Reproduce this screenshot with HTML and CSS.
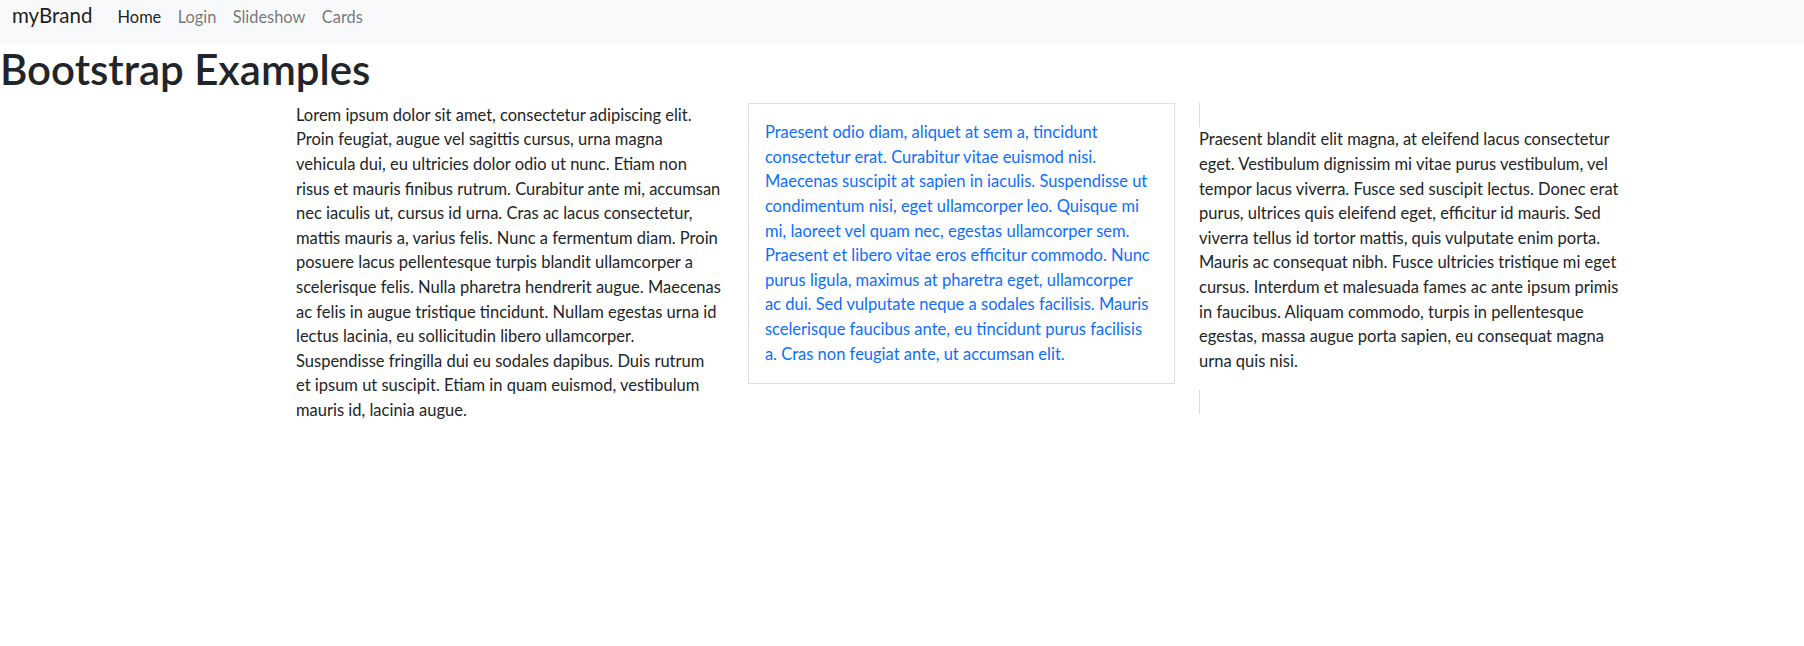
FILE: index.html
```html
<!DOCTYPE html>
<html lang="en">
<head>
<meta charset="utf-8">
<title>Bootstrap Examples</title>
<link rel="stylesheet" href="styles.css">
</head>
<body>
<nav class="navbar">
  <a class="navbar-brand" href="#">myBrand</a>
  <ul class="navbar-nav">
    <li><a class="nav-link active" href="#">Home</a></li>
    <li><a class="nav-link" href="#">Login</a></li>
    <li><a class="nav-link" href="#">Slideshow</a></li>
    <li><a class="nav-link" href="#">Cards</a></li>
  </ul>
</nav>

<h1 class="page-title">Bootstrap Examples</h1>

<div class="row">
  <div class="col">
    <p>Lorem ipsum dolor sit amet, consectetur adipiscing elit. Proin feugiat, augue vel sagittis cursus, urna magna vehicula dui, eu ultricies dolor odio ut nunc. Etiam non risus et mauris finibus rutrum. Curabitur ante mi, accumsan nec iaculis ut, cursus id urna. Cras ac lacus consectetur, mattis mauris a, varius felis. Nunc a fermentum diam. Proin posuere lacus pellentesque turpis blandit ullamcorper a scelerisque felis. Nulla pharetra hendrerit augue. Maecenas ac felis in augue tristique tincidunt. Nullam egestas urna id lectus lacinia, eu sollicitudin libero ullamcorper. Suspendisse fringilla dui eu sodales dapibus. Duis rutrum<br>et ipsum ut suscipit. Etiam in quam euismod, vestibulum mauris id, lacinia augue.</p>
  </div>
  <div class="col">
    <div class="card">
      <p class="text-primary">Praesent odio diam, aliquet at sem a, tincidunt consectetur erat. Curabitur vitae euismod nisi. Maecenas suscipit at sapien in iaculis. Suspendisse ut condimentum nisi, eget ullamcorper leo. Quisque mi mi, laoreet vel quam nec, egestas ullamcorper sem. Praesent et libero vitae eros efficitur commodo. Nunc purus ligula, maximus at pharetra eget, ullamcorper<br>ac dui. Sed vulputate neque a sodales facilisis. Mauris scelerisque faucibus ante, eu tincidunt purus facilisis a. Cras non feugiat ante, ut accumsan elit.</p>
    </div>
  </div>
  <div class="col">
    <hr class="vrule">
    <p>Praesent blandit elit magna, at eleifend lacus consectetur eget. Vestibulum dignissim mi vitae purus vestibulum, vel tempor lacus viverra. Fusce sed suscipit lectus. Donec erat purus, ultrices quis eleifend eget, efficitur id mauris. Sed viverra tellus id tortor mattis, quis vulputate enim porta. Mauris ac consequat nibh. Fusce ultricies tristique mi eget cursus. Interdum et malesuada fames ac ante ipsum primis in faucibus. Aliquam commodo, turpis in pellentesque egestas, massa augue porta sapien, eu consequat magna urna quis nisi.</p>
    <hr class="vrule">
  </div>
</div>
</body>
</html>
```
FILE: styles.css
```css
*, *::before, *::after { box-sizing: border-box; }

body {
  margin: 0;
  font-family: Lato, "Noto Sans", sans-serif;
  font-size: 16.5px;
  line-height: 24.6px;
  color: #212529;
  background: #fff;
}

a { text-decoration: none; }

.navbar {
  display: flex;
  align-items: baseline;
  height: 45px;
  padding: 0 12px;
  background: #f8f9fa;
}

.navbar-brand {
  font-size: 20.5px;
  line-height: 30.75px;
  color: rgba(0, 0, 0, 0.9);
  margin-right: 17px;
}

.navbar-nav {
  display: flex;
  list-style: none;
  margin: 0;
  padding: 0;
}

.nav-link {
  display: block;
  padding: 0 8.2px;
  font-size: 16.4px;
  color: rgba(0, 0, 0, 0.55);
}

.nav-link.active { color: rgba(0, 0, 0, 0.9); }

.page-title {
  margin: 0 0 8.2px;
  font-size: 42px;
  line-height: 49.7px;
  font-weight: 600;
}

.row {
  display: flex;
  padding-left: 284px;
}

.col {
  width: 451.5px;
  padding: 0 12px;
}

p { margin: 0 0 16.4px; }

.card {
  border: 1px solid rgba(0, 0, 0, 0.125);
  padding: 16.4px;
}

.card p { margin: 0; }

.text-primary { color: #0d6efd; }

.vrule {
  width: 1px;
  height: 24.6px;
  margin: 0;
  border: 0;
  background: #dcdcdc;
}
```
